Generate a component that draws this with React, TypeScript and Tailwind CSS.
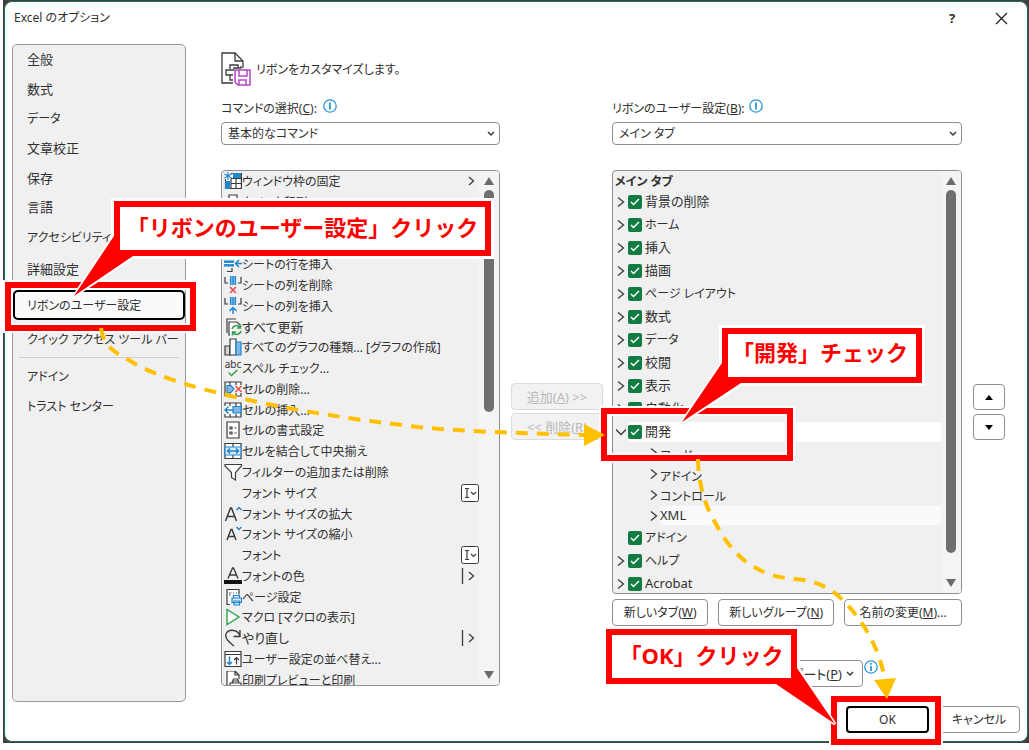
import { ReactNode } from "react";
import clsx from "clsx";

const INK = "#3b3b3b";
const BLUE = "#1f86d0";
const LIGHT = "#7fb8e6";

const Svg = ({ children }: { children?: ReactNode }) => (
  <svg
    width="18"
    height="18"
    viewBox="0 0 18 18"
    fill="none"
    stroke={INK}
    strokeWidth="1.2"
    className="shrink-0"
    aria-hidden="true"
  >
    {children}
  </svg>
);

const icons: Record<string, ReactNode> = {
  freeze: (
    <>
      <path d="M7 1.500h10.400v15H1.500V7" fill="#fff" />
      <path d="M9 1h8v5H9zM1 9h5v8H1z" fill={BLUE} stroke="none" />
      <path d="M7 6.500v10M12 6.500v10M7 11.500h10.500M7 6.500h10.500" />
      <path d="M4 0v8M.5 2l7 4M7.500 2l-7 4" stroke={BLUE} />
    </>
  ),
  print: <path d="M5 7V2h8v5M2 7h14v7h-3M5 14H2V7M5 11h8v6H5z" fill="#fff" />,
  rowInsert: (
    <>
      <path d="M3 1.500h5V4M3 16.500h5V13" />
      <path d="M0 5.500h10v6H0z" fill={BLUE} stroke="none" />
      <path d="M0 8.500h10" stroke="#fff" />
      <path d="M18 8.500h-6M15 5l-3.500 3.500L15 12" stroke={BLUE} strokeWidth="1.500" />
    </>
  ),
  colDelete: (
    <>
      <path d="M1 1v6h3M17 1v6h-3" />
      <path d="M6 0h6v9H6z" fill={LIGHT} stroke="none" />
      <path d="M6.500 0v9M9 0v9M11.500 0v9" stroke={BLUE} />
      <path d="M6 11l6 6M12 11l-6 6" stroke="#e5484d" strokeWidth="1.500" />
    </>
  ),
  colInsert: (
    <>
      <path d="M1 1v6h3M17 1v6h-3" />
      <path d="M6 0h6v8H6z" fill={LIGHT} stroke="none" />
      <path d="M6.500 0v8M9 0v8M11.500 0v8" stroke={BLUE} />
      <path d="M9 17v-6M5.500 14L9 10.500l3.500 3.500" stroke={BLUE} strokeWidth="1.500" />
    </>
  ),
  refresh: (
    <>
      <path d="M3 15V1h9M6 17H5V4h8l3 3" fill="#fff" />
      <path d="M8 11a4.500 4.500 0 0 1 8-1.500M16.500 6.500v3.500H13M17 13a4.500 4.500 0 0 1-8 1.500M8.500 17.500V14H12" stroke="#2f9e4f" strokeWidth="1.500" />
    </>
  ),
  chart: (
    <>
      <path d="M1 8h5v9H1z" fill="#d4d4d4" />
      <path d="M6 1h6v16H6z" fill="#fff" />
      <path d="M12 4h5v13h-5z" fill={LIGHT} stroke={BLUE} />
    </>
  ),
  cellDelete: (
    <>
      <path d="M1 5V2h16v3M6 2v3M12 2v3M1 13v3h16v-3M6 13v3M12 13v3" fill="#fff" />
      <path d="M3 5.500h4l3 3.500-3 3.500H3z" fill={LIGHT} stroke={BLUE} />
      <path d="M1 5v8" />
      <path d="M11.500 6l6 6M17.500 6l-6 6" stroke="#e5484d" strokeWidth="1.500" />
    </>
  ),
  cellInsert: (
    <>
      <path d="M1 5V2h16v14H1v-3M6 2v3M12 2v3M6 13v3M12 13v3" fill="#fff" />
      <path d="M9 5.500h8v6.500H9z" fill={LIGHT} stroke={BLUE} />
      <path d="M9 9H1M4.500 5.500L1 9l3.500 3.500" stroke={BLUE} strokeWidth="1.500" />
    </>
  ),
  cellFormat: (
    <>
      <path d="M3 1h12v16H3z" fill="#fff" />
      <path d="M6 6h2v2H6zM6 11h2v2H6z" />
      <path d="M10.500 7h2M10.500 12h2" />
    </>
  ),
  merge: (
    <>
      <path d="M1 1.500h16v15H1zM9 1v4M9 13v4" fill="#fff" />
      <path d="M1 5h16v8H1z" fill="#d9ebf9" stroke={BLUE} />
      <path d="M3.500 9h11M6 6.500L3.500 9 6 11.500M12 6.500L14.500 9 12 11.500" stroke={BLUE} strokeWidth="1.500" />
    </>
  ),
  filter: <path d="M1 1.500h16.500v1.500l-6 6.500v7.500l-4-2.500V9.500L1 3z" fill="#fff" />,
  blank: null,
  grow: (
    <>
      <path d="M1.500 16L6.500 3h1l5 13M3.500 11.500h7" strokeWidth="1.500" />
      <path d="M12.500 5L15 2.500 17.500 5" stroke={BLUE} strokeWidth="1.500" />
    </>
  ),
  shrink: (
    <>
      <path d="M3 15L7 4.500h1L12 15M4.500 11.500h6" strokeWidth="1.500" />
      <path d="M12.500 2L15 4.500 17.500 2" stroke={BLUE} strokeWidth="1.500" />
    </>
  ),
  fontColor: (
    <>
      <path d="M4 11.500L8.500 1h1L14 11.500M5.500 8h7" strokeWidth="1.400" />
      <path d="M0 13h18v4H0z" fill="#111" stroke="none" />
    </>
  ),
  pageSetup: (
    <>
      <path d="M6 16.500H3v-15h12v5" fill="#fff" />
      <path d="M5 5h3M9 5h1M12 5h1M5 7h2" strokeDasharray="1.500 1" />
      <path d="M9.500 10V7.500h6V10M8 10h9.500v4.500H8zM10 13h5.500v4H10z" fill="#d9ebf9" stroke={BLUE} />
    </>
  ),
  macro: <path d="M3 1.500v15L15 9z" fill="#fff" stroke="#2f9e4f" strokeWidth="1.400" />,
  redo: <path d="M16 1v6.500h-6.500M16 7.500C14.500 0 5 0 2.500 4 0 8 3 12 10 17" strokeWidth="1.400" />,
  sort: (
    <>
      <path d="M1 1.500h16v15H1zM1 4.500h16" fill="#fff" />
      <path d="M5.500 6.500v8M3 12l2.500 2.500L8 12" stroke={BLUE} strokeWidth="1.500" />
      <path d="M12.500 14.500v-7M10 10l2.500-2.500L15 10" />
    </>
  ),
  preview: (
    <>
      <path d="M5 15H3V0h8l4 4v4M11 0v4h4" fill="#fff" />
      <path d="M8 12l1.500-4h4l1.500 4M6 12h11v5H6zM9 10h5" fill="#fff" />
    </>
  ),
};

interface Command {
  icon: string;
  label: string;
  tail?: "menu" | "combo" | "split";
}

const commands: Command[] = [
  { icon: "freeze", label: "ウィンドウ枠の固定", tail: "menu" },
  { icon: "print", label: "クイック印刷" },
  { icon: "blank", label: "" },
  { icon: "blank", label: "" },
  { icon: "rowInsert", label: "シートの行を挿入" },
  { icon: "colDelete", label: "シートの列を削除" },
  { icon: "colInsert", label: "シートの列を挿入" },
  { icon: "refresh", label: "すべて更新" },
  { icon: "chart", label: "すべてのグラフの種類... [グラフの作成]" },
  { icon: "spell", label: "スペル チェック..." },
  { icon: "cellDelete", label: "セルの削除..." },
  { icon: "cellInsert", label: "セルの挿入..." },
  { icon: "cellFormat", label: "セルの書式設定" },
  { icon: "merge", label: "セルを結合して中央揃え" },
  { icon: "filter", label: "フィルターの追加または削除" },
  { icon: "blank", label: "フォント サイズ", tail: "combo" },
  { icon: "grow", label: "フォント サイズの拡大" },
  { icon: "shrink", label: "フォント サイズの縮小" },
  { icon: "blank", label: "フォント", tail: "combo" },
  { icon: "fontColor", label: "フォントの色", tail: "split" },
  { icon: "pageSetup", label: "ページ設定" },
  { icon: "macro", label: "マクロ [マクロの表示]" },
  { icon: "redo", label: "やり直し", tail: "split" },
  { icon: "sort", label: "ユーザー設定の並べ替え..." },
  { icon: "preview", label: "印刷プレビューと印刷" },
];

const tabsBefore = ["背景の削除", "ホーム", "挿入", "描画", "ページ レイアウト", "数式", "データ", "校閲", "表示", "自動化"];
const groups = ["コード", "アドイン", "コントロール", "XML"];

const labelSize = (label: string) => (/[ァ-ヶ]/.test(label) ? "pt-[2px] text-[12px]" : "text-[13px]");

const Chevron = ({ open = false }: { open?: boolean }) => (
  <svg width="10" height="12" viewBox="0 0 10 12" fill="none" stroke={INK} strokeWidth="1.300" className="shrink-0">
    <path d={open ? "M0 3.500l5 5 5-5" : "M2 1.500l5.500 4.500L2 10.500"} />
  </svg>
);

const SpellIcon = () => (
  <span className="flex w-[18px] shrink-0 flex-col items-center text-[10px] leading-[9px]">
    abc
    <svg width="12" height="8" viewBox="0 0 12 8" fill="none" stroke="#2f9e4f" strokeWidth="1.400">
      <path d="M1.500 3.500l3 3L10.500 1" />
    </svg>
  </span>
);

const Tail = ({ kind }: { kind: Command["tail"] }) => {
  if (kind === "combo") {
    return (
      <svg width="18" height="18" viewBox="0 0 18 18" fill="#fff" stroke={INK} className="ml-auto">
        <rect x="0.500" y="0.500" width="17" height="17" rx="2" />
        <path d="M4 4.500h4M4 13.500h4M6 4.500v9M10 8l2.500 2.500L15 8" fill="none" strokeWidth="1.200" />
      </svg>
    );
  }
  if (kind === "split") {
    return (
      <svg width="18" height="18" viewBox="0 0 18 18" fill="none" stroke={INK} className="ml-auto">
        <path d="M1.500 1v16M8 5l4.500 4L8 13" strokeWidth="1.300" />
      </svg>
    );
  }
  if (kind === "menu") {
    return (
      <svg width="18" height="18" viewBox="0 0 18 18" fill="none" stroke={INK} className="ml-auto">
        <path d="M8 5l4.500 4L8 13" strokeWidth="1.300" />
      </svg>
    );
  }
  return null;
};

const ScrollBar = ({ thumb }: { thumb: string }) => (
  <div className="flex w-[20px] shrink-0 flex-col items-center bg-[#f4f4f4] py-[6px]">
    <svg width="12" height="9" viewBox="0 0 12 9" fill="#6b6b6b">
      <path d="M6 0l5 8H1z" />
    </svg>
    <div className="mt-1 flex w-[10px] grow flex-col">
      <div className={clsx("rounded-full bg-[#6f6f6f]", thumb)} />
    </div>
    <svg width="12" height="9" viewBox="0 0 12 9" fill="#6b6b6b">
      <path d="M6 9l5-8H1z" />
    </svg>
  </div>
);

const InfoIcon = ({ full = false }: { full?: boolean }) => (
  <svg width="14" height="14" viewBox="0 0 14 14" fill="none" stroke="#2e96d8" className="shrink-0">
    <circle cx="7" cy="7" r="6.200" strokeWidth="1.300" />
    <path d={full ? "M7 6v5M7 3v1.800" : "M7 3.500v7"} strokeWidth="1.800" />
  </svg>
);

const Dropdown = ({ id, value }: { id: string; value: string }) => (
  <div className="mt-1 grid h-[23px] items-center">
    <select
      id={id}
      className="col-start-1 row-start-1 h-full w-full appearance-none rounded-[4px] border border-[#8f8f8f] bg-white pl-[6px] text-[12px] leading-5"
    >
      <option>{value}</option>
    </select>
    <svg width="8" height="6" viewBox="0 0 8 6" fill="none" stroke={INK} strokeWidth="1.500" className="pointer-events-none col-start-1 row-start-1 mr-[5px] justify-self-end">
      <path d="M1 1l3 3 3-3" />
    </svg>
  </div>
);

const TabRow = ({ label, state = "closed" }: { label: string; state?: "closed" | "open" | "none" }) => (
  <li className="flex h-[23px] items-center pl-[3px]">
    <span className="w-[12px] shrink-0">{state !== "none" && <Chevron open={state === "open"} />}</span>
    <label
      className={clsx("flex h-[20px] grow items-center rounded-[3px]", state === "open" && "bg-white")}
    >
      <span className="grid size-[14px] place-items-center">
        <input
          type="checkbox"
          defaultChecked
          className="col-start-1 row-start-1 size-[14px] appearance-none rounded-[2px] bg-[#107c41]"
        />
        <svg width="10" height="8" viewBox="0 0 10 8" fill="none" stroke="#fff" strokeWidth="1.500" className="pointer-events-none col-start-1 row-start-1">
          <path d="M1 4l2.500 2.500L9 1" />
        </svg>
      </span>
      <span className={clsx("mb-px ml-[3px]", labelSize(label))}>{label}</span>
    </label>
  </li>
);

const outlineButton =
  "flex h-[27px] items-center justify-center rounded-[4px] border border-[#8f8f8f] bg-white text-[12px] whitespace-nowrap";

const disabledButton =
  "h-[27px] rounded-[4px] border border-[#dcdcdc] bg-[#f2f2f2] whitespace-nowrap text-[#b8b8b8] [font-feature-settings:normal]";

const Callout = ({ className, children }: { className: string; children: ReactNode }) => (
  <div
    className={clsx(
      "absolute flex h-[55px] items-center justify-center border-[6px] border-[#f00] bg-white text-[22px] leading-8 font-bold whitespace-nowrap text-[#f00] shadow-[0_0_0_3px_white] [font-feature-settings:normal]",
      className
    )}
  >
    {children}
  </div>
);

const Frame = ({ className }: { className: string }) => (
  <div
    className={clsx(
      "pointer-events-none absolute border-[6px] border-[#f00] shadow-[0_0_0_2px_white,inset_0_0_0_2px_white]",
      className
    )}
  />
);

const Annotations = () => (
  <>
    <Frame className="top-[282px] left-[5px] h-[49px] w-[191px]" />
    <Frame className="top-[408px] left-[601px] h-[53px] w-[192px]" />
    <Frame className="top-[696px] left-[831px] h-[49px] w-[110px]" />
    <Callout className="top-[201px] left-[114px] w-[377px] pb-1">「リボンのユーザー設定」クリック</Callout>
    <Callout className="top-[328px] left-[722px] w-[200px] pr-1 pb-2">「開発」チェック</Callout>
    <Callout className="top-[629px] left-[606px] w-[191px] pb-1">「OK」クリック</Callout>
    <svg width="1029" height="750" viewBox="0 0 1029 750" className="pointer-events-none absolute top-0 left-0">
      <g fill="none" stroke="#fff" strokeWidth="3">
        <path d="M113 236L74 296l60-39" />
        <path d="M721 363l-39 59 60-38" />
        <path d="M798 668l37 56-59-39" />
      </g>
      <g fill="#f00">
        <path d="M114 236v-3h6v17h13v6L74 296z" />
        <path d="M722 363v-3h6v17h13v6l-59 39z" />
        <path d="M797 668v-3h-6v13h-15v6l59 40z" />
      </g>
      <g fill="none" stroke="#ffc000" strokeWidth="4" strokeDasharray="12 9">
        <path d="M101 328C104 348 115 352 132 362C160 378 190 386 231 396C290 410 350 419 418 427C470 432 520 433 584 435" />
        <path d="M698 459C698 480 704 505 716 524C726 544 742 562 758 569C775 579 790 578 804 580C832 584 850 605 865 628C877 648 882 664 885 680" />
      </g>
      <g fill="#ffc000">
        <path d="M584 424l21 11-21 11z" />
        <path d="M874 680l22-2-9 21z" />
      </g>
    </svg>
  </>
);

const NavButton = ({ label }: { label: string }) => (
  <button className="flex w-full items-center pl-[14px] text-left whitespace-nowrap">
    <span className={clsx("mb-px", labelSize(label))}>{label}</span>
  </button>
);

const Sidebar = () => (
  <nav className="flex h-[658px] w-[174px] shrink-0 flex-col rounded-[5px] border border-[#9a9a9a] bg-[#f0f0f0]">
    <div className="grid h-[207px] auto-rows-fr">
      {["全般", "数式", "データ", "文章校正", "保存", "言語", "アクセシビリティ"].map((item) => (
        <NavButton key={item} label={item} />
      ))}
    </div>
    <div className="grid h-[105px] auto-rows-fr grid-cols-1 items-center">
      <NavButton label="詳細設定" />
      <button className="flex h-[30px] w-full items-center rounded-[5px] border-2 border-black bg-[#fafafa] pl-[12px] whitespace-nowrap">
        <span className="pt-[2px] text-[12px]">リボンのユーザー設定</span>
      </button>
      <NavButton label="クイック アクセス ツール バー" />
    </div>
    <hr className="mx-[6px] border-[#cfcfcf]" />
    <div className="mt-1 grid h-[59px] auto-rows-fr">
      <NavButton label="アドイン" />
      <NavButton label="トラスト センター" />
    </div>
  </nav>
);

const CommandColumn = () => (
  <div className="flex min-w-0 flex-[279] flex-col">
    <label htmlFor="commands" className="flex h-5 items-center text-[12px] whitespace-nowrap">
      <span className="pt-[2px]">コマンドの選択(<u>C</u>):</span>
      <span className="mb-1 ml-[6px]"><InfoIcon /></span>
    </label>
    <Dropdown id="commands" value="基本的なコマンド" />
    <div className="mt-[25px] flex h-[516px] overflow-hidden rounded-[4px] border border-[#8f8f8f] bg-[#f0f0f0]">
      <ul className="grid h-[519px] min-w-0 grow auto-rows-fr">
        {commands.map((command, i) => (
          <li key={i} className="flex min-h-0 items-center pl-[2px] leading-[18px] whitespace-nowrap">
            {command.icon === "spell" ? <SpellIcon /> : <Svg>{icons[command.icon]}</Svg>}
            <span className={labelSize(command.label)}>{command.label}</span>
            <Tail kind={command.tail} />
          </li>
        ))}
      </ul>
      <ScrollBar thumb="h-[222px]" />
    </div>
  </div>
);

const RibbonColumn = () => (
  <div className="flex min-w-0 flex-[350] flex-col">
    <label htmlFor="ribbon" className="flex h-5 items-center text-[12px] whitespace-nowrap">
      <span className="pt-[2px]">リボンのユーザー設定(<u>B</u>):</span>
      <span className="mb-1 ml-1"><InfoIcon /></span>
    </label>
    <Dropdown id="ribbon" value="メイン タブ" />
    <div className="mt-[25px] flex h-[424px] overflow-hidden rounded-[4px] border border-[#8f8f8f] bg-[#f0f0f0]">
      <div className="min-w-0 grow">
        <div className="h-[19px] pt-px pl-[2px] text-[12px] leading-5 font-bold">メイン タブ</div>
        <ul>
          {tabsBefore.map((tab) => (
            <TabRow key={tab} label={tab} />
          ))}
          <TabRow label="開発" state="open" />
          <li>
            <ul className="grid h-[83px] auto-rows-fr">
              {groups.map((group) => (
                <li key={group} className="flex items-center pl-[36px]">
                  <Chevron />
                  <span
                    className={clsx(
                      "ml-px h-[19px] grow rounded-[3px] leading-[19px]",
                      labelSize(group),
                      group === "XML" && "bg-[#fafafa]"
                    )}
                  >
                    {group}
                  </span>
                </li>
              ))}
            </ul>
          </li>
          <TabRow label="アドイン" state="none" />
          <TabRow label="ヘルプ" />
          <TabRow label="Acrobat" />
        </ul>
      </div>
      <ScrollBar thumb="h-[363px]" />
    </div>
    <div className="mt-[5px] flex gap-[10px]">
      <button className={clsx(outlineButton, "flex-[96]")}>新しいタブ(<u>W</u>)</button>
      <button className={clsx(outlineButton, "flex-[116]")}>新しいグループ(<u>N</u>)</button>
      <button className={clsx(outlineButton, "flex-[118]")}>名前の変更(<u>M</u>)...</button>
    </div>
    <div className="mt-[34px] mr-[84px] flex items-start justify-end gap-px">
      <button className="flex h-[27px] w-[161px] items-center justify-end gap-1 rounded-[4px] border border-[#8f8f8f] bg-white pr-2 whitespace-nowrap">
        <span>ポート(<u>P</u>)</span>
        <svg width="8" height="6" viewBox="0 0 8 6" fill="none" stroke={INK} strokeWidth="1.500">
          <path d="M1 1l3 3 3-3" />
        </svg>
      </button>
      <InfoIcon full />
    </div>
  </div>
);

const App = () => {
  return (
    <div className="relative min-h-screen bg-white font-['Noto_Sans','Noto_Sans_CJK_JP',sans-serif] text-[13px] leading-5 text-[#303030] [font-feature-settings:'palt']">
      <div className="ml-[3px] bg-[#404040] p-px">
        <div className="rounded-[8px] border border-[#1e7145] bg-white">
          <header className="flex h-[42px] items-start pt-[6px] pr-[19px] pl-[9px]">
            <h1 className="text-[12px]">Excel のオプション</h1>
            <button aria-label="ヘルプ" className="ml-auto w-[16px] font-bold">?</button>
            <button aria-label="閉じる" className="mt-[4px] ml-[35px]">
              <svg width="13" height="13" viewBox="0 0 13 13" fill="none" stroke="#222" strokeWidth="1.300">
                <path d="M1 1l11 11M12 1L1 12" />
              </svg>
            </button>
          </header>

          <div className="flex gap-[35px] pr-[22px] pl-[7px]">
            <Sidebar />
            <main className="min-w-0 grow pt-[6px]">
              <div className="flex h-[38px] items-center gap-[5px]">
                <svg width="30" height="34" viewBox="0 0 30 34" fill="none" stroke={INK} strokeWidth="1.300" aria-hidden="true">
                  <path d="M12 31H1V1h13l8 8v7" fill="#fff" />
                  <path d="M14 1v8h8M9 17v-4h8v3M13 18H5v5h7M9 23v5h3M12 16h8v-2" />
                  <path d="M14 18h15v15H17l-3-3z" fill="#fff" stroke="#b146c2" strokeWidth="1.500" />
                  <path d="M18 18v6h8v-6M18 33v-5h7v5" stroke="#b146c2" strokeWidth="1.500" />
                </svg>
                <h2 className="pt-[2px] text-[12px]">リボンをカスタマイズします。</h2>
              </div>
              <div className="mt-[10px] flex">
                <CommandColumn />
                <div className="mt-[285px] mr-[9px] ml-[11px] flex w-[92px] shrink-0 flex-col gap-[3px]">
                  <button disabled className={disabledButton}>
                    追加(<u>A</u>) &gt;&gt;
                  </button>
                  <button disabled className={disabledButton}>
                    &lt;&lt; 削除(<u>R</u>)
                  </button>
                </div>
                <RibbonColumn />
                <div className="mt-[286px] ml-[11px] flex w-[32px] shrink-0 flex-col gap-[4px]">
                  <button aria-label="上へ" className="flex h-[26px] items-center justify-center rounded-[4px] border border-[#8f8f8f]">
                    <svg width="8" height="5" viewBox="0 0 8 5"><path d="M4 0l4 5H0z" /></svg>
                  </button>
                  <button aria-label="下へ" className="flex h-[26px] items-center justify-center rounded-[4px] border border-[#8f8f8f]">
                    <svg width="8" height="5" viewBox="0 0 8 5"><path d="M4 5l4-5H0z" /></svg>
                  </button>
                </div>
              </div>
            </main>
          </div>

          <footer className="flex justify-end gap-[9px] pt-[4px] pr-[7px] pb-[8px]">
            <button className="h-[27px] w-[83px] rounded-[4px] border-2 border-black bg-white text-[12px]">OK</button>
            <button className={clsx(outlineButton, "w-[82px]")}>キャンセル</button>
          </footer>
        </div>
      </div>
      <Annotations />
    </div>
  );
};

export default App;
